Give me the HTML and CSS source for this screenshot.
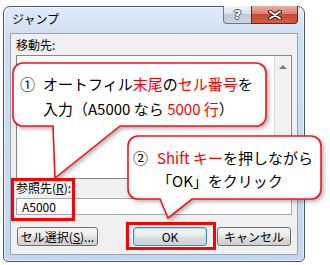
FILE: index.html
```html
<!DOCTYPE html>
<html lang="ja">
<head>
    <meta charset="UTF-8">
    <meta name="viewport" content="width=device-width, initial-scale=1.0">
    <title>ジャンプ</title>
    <link rel="stylesheet" href="styles.css">
</head>
<body>
    <div class="window">
        <div class="titlebar">
            <span class="title">ジャンプ</span>
            <div class="caption">
                <span class="cap-btn help">?</span>
                <span class="cap-btn close">
                    <svg width="14" height="10" viewBox="0 0 14 10">
                        <path d="M2 1.5 L12 8.5 M12 1.5 L2 8.5" stroke="#4a1d16" stroke-width="4" stroke-linecap="round"/>
                        <path d="M2 1.5 L12 8.5 M12 1.5 L2 8.5" stroke="#fff" stroke-width="2" stroke-linecap="round"/>
                    </svg>
                </span>
            </div>
        </div>
        <div class="client">
            <div class="label">移動先:</div>
            <div class="listbox">
                <div class="scrollbar"><span class="arrow-up"></span></div>
            </div>
            <div class="label">参照先(<u>R</u>):</div>
            <div class="textbox">A5000</div>
            <div class="buttons">
                <button class="btn select">セル選択(<u>S</u>)...</button>
                <button class="btn default">OK</button>
                <button class="btn">キャンセル</button>
            </div>
        </div>
    </div>

    <!-- balloons drawn over the dialog -->
    <svg class="balloons" width="330" height="265" viewBox="0 0 330 265">
        <path d="M23 63 H256 A10 10 0 0 1 266 73 V116 A10 10 0 0 1 256 126 H120 L55 178 L53 126 H23 A10 10 0 0 1 13 116 V73 A10 10 0 0 1 23 63 Z"/>
        <path d="M138 136 H311 A10 10 0 0 1 321 146 V189 A10 10 0 0 1 311 199 H192 L168 218 L160 199 H138 A10 10 0 0 1 128 189 V146 A10 10 0 0 1 138 136 Z"/>
    </svg>

    <div class="mark mark-ref"></div>
    <div class="mark mark-ok"></div>

    <div class="note note1">
        <span class="num">①</span>
        <p>オートフィル<em>末尾</em>の<em>セル番号</em>を<br>入力（A5000 なら <em>5000 行</em>）</p>
    </div>
    <div class="note note2">
        <span class="num">②</span>
        <p><em>Shift キー</em>を押しながら<br>「OK」をクリック</p>
    </div>
</body>
</html>
```

FILE: styles.css
```css
body {
    margin: 0;
    background: #fff;
    font-family: "Noto Sans CJK JP", sans-serif;
    font-size: 12px;
    color: #000;
}
.window {
    box-sizing: border-box;
    width: 302px;
    height: 256px;
    margin: 6px 0 0 3px;
    border: 1px solid #4e5866;
    border-radius: 7px 7px 5px 5px;
    background: linear-gradient(to bottom, #e0ebf8 0, #d0e0f3 26px, #c2d7ef 100%);
    box-shadow: inset 0 0 0 1px rgba(255, 255, 255, 0.6);
}
.titlebar {
    height: 26px;
    display: flex;
    justify-content: space-between;
    align-items: flex-start;
}
.title {
    padding: 5px 0 0 8px;
    font-size: 12px;
    line-height: 14px;
}
.caption {
    display: flex;
    margin: -1px 6px 0 0;
}
.cap-btn {
    box-sizing: border-box;
    height: 18px;
    display: flex;
    align-items: center;
    justify-content: center;
}
.help {
    width: 28px;
    border: 1px solid #6a7a90;
    border-top: none;
    border-right: none;
    border-radius: 0 0 0 4px;
    background: linear-gradient(to bottom, #f2f5f9 0, #d9e1ea 45%, #bfcad8 50%, #cbd5e2 100%);
    color: #fff;
    font: bold 13px "DejaVu Sans", sans-serif;
    text-shadow: 1px 0 0 #555, -1px 0 0 #555, 0 1px 0 #555, 0 -1px 0 #555;
}
.close {
    width: 47px;
    border: 1px solid #5e2a22;
    border-top: none;
    border-radius: 0 0 4px 0;
    background: linear-gradient(to bottom, #eab0a3 0, #dc8170 45%, #c44a32 50%, #d35d41 100%);
}
.client {
    box-sizing: border-box;
    height: 222px;
    margin: 0 6px 6px;
    padding: 4px 5px;
    border: 1px solid #97a5b8;
    background: #f0f0f0;
}
.label {
    line-height: 14px;
}
.listbox {
    box-sizing: border-box;
    height: 124px;
    margin: 3px 0 2px;
    border: 1px solid #828790;
    background: #fff;
    display: flex;
    justify-content: flex-end;
}
.scrollbar {
    width: 17px;
    border-left: 1px solid #dadada;
    background: #f2f2f2;
    display: flex;
    justify-content: center;
    padding-top: 9px;
    box-sizing: border-box;
}
.arrow-up {
    width: 0;
    height: 0;
    border-left: 4px solid transparent;
    border-right: 4px solid transparent;
    border-bottom: 4px solid #7a7a7a;
}
.textbox {
    box-sizing: border-box;
    height: 17px;
    margin-top: 3px;
    padding-left: 5px;
    border: 1px solid #a6abb3;
    background: #fff;
    line-height: 15px;
}
.buttons {
    display: flex;
    gap: 10px;
    margin-top: 12px;
    padding: 0 1px;
}
.btn {
    box-sizing: border-box;
    width: 74px;
    height: 19px;
    padding: 0;
    border: 1px solid #707070;
    border-radius: 3px;
    background: linear-gradient(to bottom, #f4f4f4 0, #ebebeb 48%, #dddddd 52%, #cfcfcf 100%);
    font-family: "Noto Sans CJK JP", sans-serif;
    font-size: 12px;
    line-height: 15px;
    color: #000;
}
.btn.select {
    width: 81px;
    margin-right: auto;
}
.btn.default {
    border-color: #3a8fc8;
    box-shadow: inset 0 0 0 1px #a9def6;
}
.balloons {
    position: absolute;
    left: 0;
    top: 0;
    filter: drop-shadow(2px 2px 2px rgba(0, 0, 0, 0.3));
}
.balloons path {
    fill: #fff;
    stroke: #f2141c;
    stroke-width: 1.6;
}
.mark {
    position: absolute;
    box-sizing: border-box;
    border: 3px solid #f00;
}
.mark-ref {
    left: 11px;
    top: 178px;
    width: 64px;
    height: 43px;
}
.mark-ok {
    left: 126px;
    top: 222px;
    width: 90px;
    height: 28px;
}
.note {
    position: absolute;
    display: flex;
    font-size: 15px;
    white-space: nowrap;
}
.note p {
    margin: 0;
}
.note em {
    font-style: normal;
    color: #f00;
}
.note1 {
    left: 20px;
    top: 71px;
    line-height: 25px;
}
.note1 .num {
    width: 23px;
}
.note2 {
    left: 133px;
    top: 146px;
    line-height: 23px;
}
.note2 .num {
    width: 24px;
}
```
